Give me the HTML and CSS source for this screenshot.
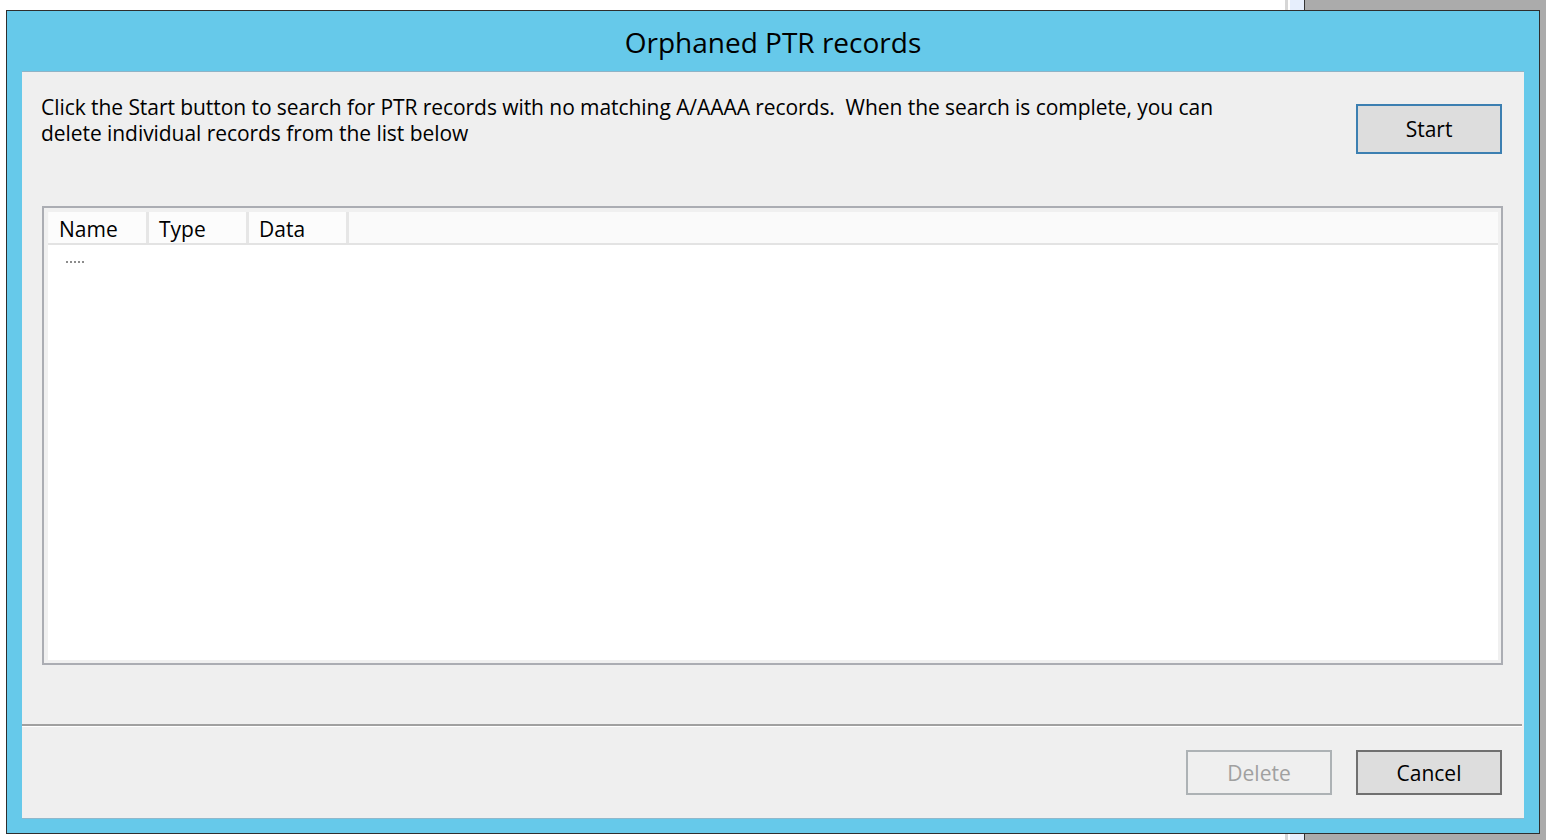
FILE: index.html
```html
<!DOCTYPE html>
<html lang="en">
<head>
<meta charset="utf-8">
<title>Orphaned PTR records</title>
<link rel="stylesheet" href="styles.css">
</head>
<body>
<div class="window">
  <div class="titlebar">Orphaned PTR records</div>
  <div class="content">
    <div class="top-row">
      <p class="intro">Click the Start button to search for PTR records with no matching A/AAAA records.&nbsp; When the search is complete, you can<br>delete individual records from the list below</p>
      <button class="btn btn-start" type="button">Start</button>
    </div>
    <div class="list">
      <div class="list-header">
        <div class="col">Name</div>
        <div class="col">Type</div>
        <div class="col">Data</div>
        <div class="col-fill"></div>
      </div>
      <div class="list-body">
        <div class="focus-dots"></div>
      </div>
    </div>
    <div class="footer">
      <button class="btn btn-disabled" type="button" disabled>Delete</button>
      <button class="btn btn-cancel" type="button">Cancel</button>
    </div>
  </div>
</div>
</body>
</html>
```
FILE: styles.css
```css
html, body {
  margin: 0;
  padding: 0;
}
body {
  width: 1546px;
  height: 840px;
  overflow: hidden;
  font-family: "Open Sans", "Noto Sans", sans-serif;
  background: linear-gradient(to right, #ffffff 0, #ffffff 1285px, #d6d6d6 1285px, #d6d6d6 1288px, #ffffff 1288px, #ffffff 1290px, #e6eefc 1290px, #e6eefc 1304px, #333333 1304px, #333333 1305px, #ababab 1305px);
}
.window {
  box-sizing: border-box;
  margin: 10px 0 0 6px;
  width: 1534px;
  height: 824px;
  border: 1px solid #2e2e2e;
  background: #66c9ea;
  display: flex;
  flex-direction: column;
}
.titlebar {
  height: 61px;
  display: flex;
  align-items: center;
  justify-content: center;
  font-size: 28px;
  color: #000;
}
.content {
  flex: 1;
  margin: 0 15px 15px 15px;
  background: #efefef;
  box-shadow: 0 -1px 0 #8fb3c6, 0 1px 0 #8fb8cc;
  display: flex;
  flex-direction: column;
}
.top-row {
  display: flex;
  justify-content: space-between;
  align-items: flex-start;
  padding: 22px 22px 0 19px;
}
.intro {
  margin: 0;
  font-size: 21px;
  line-height: 26px;
  letter-spacing: -0.06px;
  color: #000;
}
.btn {
  box-sizing: border-box;
  width: 146px;
  height: 45px;
  font-family: inherit;
  font-size: 21px;
  color: #000;
  background: #dddddd;
  border: 2px solid #707070;
  padding: 0;
  border-radius: 0;
}
.btn-start {
  height: 50px;
  margin-top: 10px;
  border-color: #3c7fb1;
}
.btn-disabled {
  background: #efefef;
  border-color: #adb2b5;
  color: #a0a0a0;
}
.list {
  box-sizing: border-box;
  margin: 52px 21px 0 20px;
  height: 459px;
  border: 2px solid #abadb3;
  display: flex;
  flex-direction: column;
  background: #ffffff;
  box-shadow: inset 4px 4px 0 #f0f0f0, inset -3px -3px 0 #f0f0f0;
  padding: 4px 3px 3px 4px;
}
.list-header {
  box-sizing: border-box;
  display: flex;
  height: 33px;
  background: #fafafa;
  border-bottom: 2px solid #e3e3e3;
  padding-left: 1px;
}
.col {
  box-sizing: border-box;
  width: 100px;
  border-right: 3px solid #e6e6e6;
  background: #fcfcfc;
  font-size: 21px;
  line-height: 31px;
  padding: 2px 0 0 10px;
  color: #000;
}
.col-fill {
  flex: 1;
}
.list-body {
  flex: 1;
  padding: 16px 0 0 18px;
}
.focus-dots {
  width: 19px;
  height: 2px;
  background: repeating-linear-gradient(to right, #8c8c8c 0, #8c8c8c 2px, transparent 2px, transparent 4px);
}
.footer {
  margin: auto 2px 0 0;
  border-top: 2px solid #a0a0a0;
  box-shadow: inset 0 1px 0 #ffffff;
  display: flex;
  justify-content: flex-end;
  gap: 24px;
  padding: 24px 20px 23px 0;
}
```
